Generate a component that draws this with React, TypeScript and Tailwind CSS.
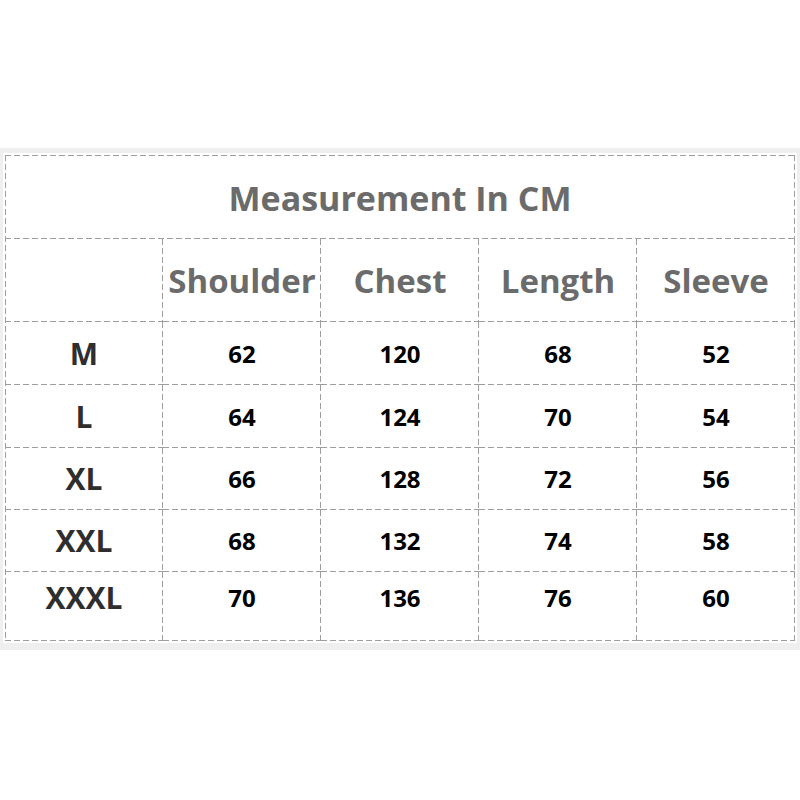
import React from "react";

const cell =
  "flex items-center justify-center [background:linear-gradient(to_right,#9e9e9e_0_6px,transparent_6px)_0_100%/9px_1px_repeat-x,linear-gradient(to_bottom,#9e9e9e_0_6px,transparent_6px)_100%_0/1px_9px_repeat-y]";

const headers = ["Shoulder", "Chest", "Length", "Sleeve"];
const rows: [string, string[]][] = [
  ["M", ["62", "120", "68", "52"]],
  ["L", ["64", "124", "70", "54"]],
  ["XL", ["66", "128", "72", "56"]],
  ["XXL", ["68", "132", "74", "58"]],
  ["XXXL", ["70", "136", "76", "60"]],
];

export default function App() {
  return (
    <div className="w-[800px] h-[800px] bg-white pt-[148px] font-['Open_Sans',sans-serif]">
      <div className="bg-[#efefef] h-[502px] pt-[5px] px-[3px]">
        <div className="bg-white p-[2px] h-[490px]">
          <div className="grid grid-cols-5 grid-rows-[84px_83px_63px_63px_62px_62px_69px] w-[790px] [background:linear-gradient(to_right,#9e9e9e_0_6px,transparent_6px)_0_0/9px_1px_repeat-x,linear-gradient(to_bottom,#9e9e9e_0_6px,transparent_6px)_0_0/1px_9px_repeat-y]">
            <div className={`${cell} col-span-5 pt-[2px]`}>
              <span className="text-[34px] font-bold text-[#6b6b6b] leading-none">
                Measurement In CM
              </span>
            </div>
            <div className={cell}></div>
            {headers.map((h) => (
              <div key={h} className={cell}>
                <span className="text-[33px] font-bold text-[#6b6b6b] leading-none">{h}</span>
              </div>
            ))}
            {rows.map(([size, vals], i) => {
              const last = i === rows.length - 1;
              return (
                <React.Fragment key={size}>
                  <div className={`${cell} ${last ? "pb-[18px]" : ""}`}>
                    <span className="text-[30px] font-bold text-[#2e2e2e] leading-none">{size}</span>
                  </div>
                  {vals.map((v, j) => (
                    <div key={j} className={`${cell} ${last ? "pb-[18px]" : ""}`}>
                      <span className="text-[24px] font-bold text-black leading-none">{v}</span>
                    </div>
                  ))}
                </React.Fragment>
              );
            })}
          </div>
        </div>
      </div>
    </div>
  );
}
